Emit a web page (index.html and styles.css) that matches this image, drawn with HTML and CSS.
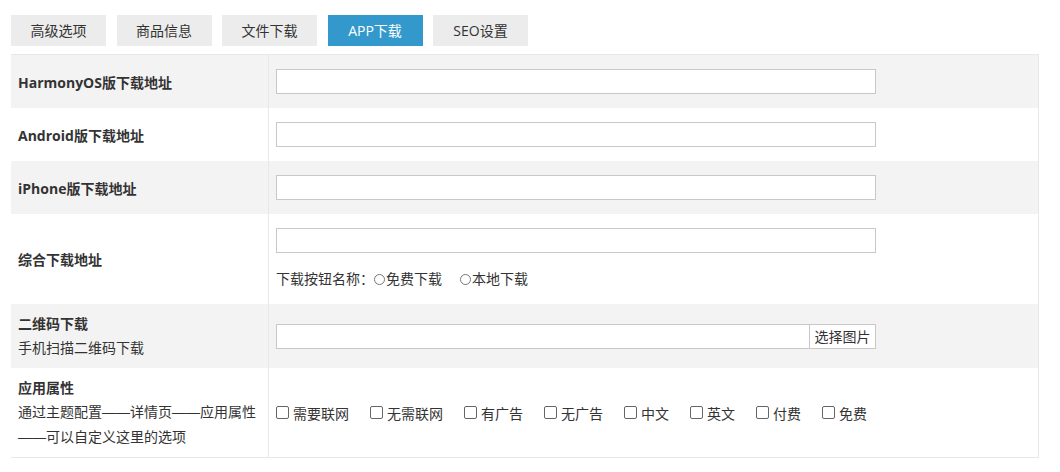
FILE: index.html
```html
<!DOCTYPE html>
<html lang="zh-CN">
<head>
<meta charset="utf-8">
<title>APP下载</title>
<link rel="stylesheet" href="styles.css">
</head>
<body>
<div class="page">
  <div class="tabs">
    <span class="tab">高级选项</span>
    <span class="tab">商品信息</span>
    <span class="tab">文件下载</span>
    <span class="tab active">APP下载</span>
    <span class="tab">SEO设置</span>
  </div>
  <div class="table">
    <div class="row gray r1">
      <div class="label"><b>HarmonyOS版下载地址</b></div>
      <div class="field"><input class="text" type="text"></div>
    </div>
    <div class="row r1">
      <div class="label"><b>Android版下载地址</b></div>
      <div class="field"><input class="text" type="text"></div>
    </div>
    <div class="row gray r1">
      <div class="label"><b>iPhone版下载地址</b></div>
      <div class="field"><input class="text" type="text"></div>
    </div>
    <div class="row r4">
      <div class="label"><b>综合下载地址</b></div>
      <div class="field col">
        <input class="text" type="text">
        <div class="radios">
          <span>下载按钮名称：</span>
          <label class="radio"><span class="dot"></span>免费下载</label>
          <label class="radio"><span class="dot"></span>本地下载</label>
        </div>
      </div>
    </div>
    <div class="row gray r5">
      <div class="label lines"><b>二维码下载</b><span>手机扫描二维码下载</span></div>
      <div class="field">
        <div class="upload"><input class="text grow" type="text"><span class="btn">选择图片</span></div>
      </div>
    </div>
    <div class="row r6">
      <div class="label lines"><b>应用属性</b><span class="desc">通过主题配置<span class="dash">——</span>详情页<span class="dash">——</span>应用属性<span class="dash">——</span>可以自定义这里的选项</span></div>
      <div class="field checks">
        <label class="check"><span class="box"></span>需要联网</label>
        <label class="check"><span class="box"></span>无需联网</label>
        <label class="check"><span class="box"></span>有广告</label>
        <label class="check"><span class="box"></span>无广告</label>
        <label class="check"><span class="box"></span>中文</label>
        <label class="check"><span class="box"></span>英文</label>
        <label class="check"><span class="box"></span>付费</label>
        <label class="check"><span class="box"></span>免费</label>
      </div>
    </div>
  </div>
</div>
</body>
</html>
```
FILE: styles.css
```css
* { box-sizing: border-box; }
html, body { margin: 0; padding: 0; background: #fff; }
body {
  font-family: "Open Sans", "Noto Sans CJK SC", sans-serif;
  font-size: 14px;
  color: #333;
}
.page { padding: 15px 21px 0 11px; }
.tabs { display: flex; gap: 10.5px; height: 31px; }
.tab {
  width: 95px;
  height: 31px;
  background: #ececec;
  display: flex;
  align-items: center;
  justify-content: center;
  color: #333;
  font-size: 14px;
  padding-bottom: 1px;
}
.tab.active { background: #3399cc; color: #fff; }
.table {
  margin-top: 8px;
  border: 1px solid #e8e8e8;
  border-left: none;
}
.row { display: grid; grid-template-columns: 258px 1fr; }
.row.gray { background: #f3f3f3; }
.label {
  border-right: 1px solid #e8e8e8;
  padding: 0 6px 0 7px;
  display: flex;
  align-items: center;
}
.label b { font-weight: bold; }
.label.lines { flex-direction: column; align-items: flex-start; justify-content: center; line-height: 24.5px; }
.label.lines span { font-weight: normal; }
.dash { font-family: "Liberation Sans", sans-serif; letter-spacing: 0; }
.field { padding: 0 7px; display: flex; align-items: center; }
.r1 { height: 53px; }
.r4 { height: 90px; }
.r5 { height: 64px; }
.r6 { height: 89px; }
.r6 .label { padding-right: 4px; }
.text {
  width: 600px;
  height: 25px;
  border: 1px solid #c8c8c8;
  background: #fff;
  padding: 0 4px;
  margin: 0;
  font: inherit;
  outline: none;
}
.field.col { flex-direction: column; align-items: flex-start; justify-content: flex-start; padding-top: 14px; }
.radios { margin-top: 14px; line-height: 24px; display: flex; align-items: center; }
.radio { display: flex; align-items: center; margin-right: 18px; }
.dot {
  width: 11px; height: 11px;
  border: 1px solid #777;
  border-radius: 50%;
  margin-right: 1px;
  background: #fff;
}
.upload { display: flex; width: 600px; }
.upload .grow { flex: 1; width: auto; border-right: none; }
.btn {
  height: 25px;
  width: 67px;
  border: 1px solid #c8c8c8;
  background: #fff;
  display: flex;
  align-items: center;
  justify-content: center;
  font-size: 14px;
}
.check { display: flex; align-items: center; margin-right: 21px; }
.box {
  width: 13px; height: 13px;
  border: 1px solid #666;
  border-radius: 2px;
  background: #fff;
  margin-right: 4px;
}
```
